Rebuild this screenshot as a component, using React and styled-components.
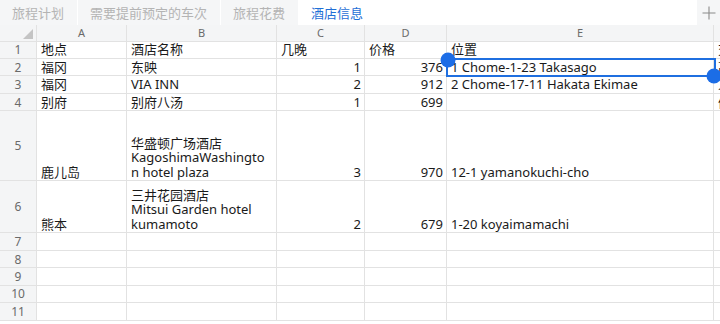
import React from "react";
import styled, { createGlobalStyle } from "styled-components";

const GlobalStyle = createGlobalStyle`
  html, body { margin: 0; padding: 0; background: #fff; }
  body { font-family: "Noto Sans", "Noto Sans CJK SC", sans-serif; }
`;

const UNIT = 17.45;
const COLS = [37, 90, 150, 88, 82, 267, 60];

const Page = styled.div`
  width: 720px;
  height: 324px;
  overflow: hidden;
  background: #fff;
  display: flex;
  flex-direction: column;
`;

const TabBar = styled.div`
  height: 25px;
  flex: none;
  display: flex;
  align-items: stretch;
  background: #fff;
`;

const Tab = styled.div`
  display: flex;
  align-items: center;
  padding: 0 13px 0 12px;
  margin-right: 1px;
  font-family: "Noto Sans CJK SC", sans-serif;
  font-size: 13px;
  color: ${(p) => (p.$active ? "#1f6fd6" : "#b4b4b4")};
  background: ${(p) => (p.$active ? "#fff" : "#f5f6f7")};
`;

const Spacer = styled.div`
  flex: 1;
`;

const AddButton = styled.div`
  width: 23px;
  display: flex;
  align-items: center;
  justify-content: center;
  background: #f5f6f7;
`;

const SheetArea = styled.div`
  position: relative;
  flex: 1;
`;

const Grid = styled.div`
  display: grid;
  grid-template-columns: ${COLS.map((c) => c + "px").join(" ")};
  grid-auto-rows: auto;
`;

const Cell = styled.div`
  box-sizing: border-box;
  height: ${(p) => p.$h}px;
  border-right: 1px solid #e2e2e2;
  border-bottom: 1px solid #e2e2e2;
  overflow: hidden;
  display: flex;
  flex-direction: column;
  justify-content: flex-end;
  align-items: ${(p) => (p.$num ? "flex-end" : "flex-start")};
  padding: 0 3px 1px 4px;
  font-family: "Noto Sans", "Noto Sans CJK SC", sans-serif;
  font-size: 13px;
  line-height: 14.5px;
  color: #1a1a1a;
  white-space: nowrap;
`;

const HeaderCell = styled.div`
  box-sizing: border-box;
  height: 16.5px;
  border-right: 1px solid #e2e2e2;
  border-bottom: 1px solid #e2e2e2;
  background: #f4f5f6;
  display: flex;
  align-items: center;
  justify-content: center;
  font-family: "Noto Sans", sans-serif;
  font-size: 11px;
  color: #6a6a6a;
  position: relative;
`;

const RowNum = styled.div`
  box-sizing: border-box;
  height: ${(p) => p.$h}px;
  border-right: 1px solid #e2e2e2;
  border-bottom: 1px solid #e2e2e2;
  background: #f4f5f6;
  display: flex;
  align-items: center;
  justify-content: center;
  font-family: "Noto Sans", sans-serif;
  font-size: 12px;
  color: #6a6a6a;
`;

const Selection = styled.div`
  position: absolute;
  box-sizing: border-box;
  border: 2px solid #1f6fe0;
  pointer-events: none;
`;

const Handle = styled.div`
  position: absolute;
  width: 15px;
  height: 15px;
  border-radius: 50%;
  background: #1c6de6;
  transform: translate(-50%, -50%);
`;

const rows = [
  { n: 1, u: 1, c: ["地点", "酒店名称", "几晚", "价格", "位置", "交通"] },
  { n: 2, u: 1, c: ["福冈", "东映", 1, 376, "1 Chome-1-23 Takasago", "高砂"] },
  { n: 3, u: 1, c: ["福冈", "VIA INN", 2, 912, "2 Chome-17-11 Hakata Ekimae", "人"] },
  { n: 4, u: 1, c: ["别府", "别府八汤", 1, 699, "", "们"] },
  {
    n: 5,
    u: 4,
    c: ["鹿儿岛", ["华盛顿广场酒店", "KagoshimaWashingto", "n hotel plaza"], 3, 970, "12-1 yamanokuchi-cho", ""],
  },
  {
    n: 6,
    u: 3,
    c: ["熊本", ["三井花园酒店", "Mitsui Garden hotel", "kumamoto"], 2, 679, "1-20 koyaimamachi", ""],
  },
  { n: 7, u: 1, c: ["", "", "", "", "", ""] },
  { n: 8, u: 1, c: ["", "", "", "", "", ""] },
  { n: 9, u: 1, c: ["", "", "", "", "", ""] },
  { n: 10, u: 1, c: ["", "", "", "", "", ""] },
  { n: 11, u: 1, c: ["", "", "", "", "", ""] },
];

const Corner = () => (
  <svg width="10" height="10" viewBox="0 0 10 10" style={{ position: "absolute", right: 3, bottom: 2 }}>
    <polygon points="10,0 10,10 0,10" fill="#c4c4c4" />
  </svg>
);

export default function App() {
  return (
    <>
      <GlobalStyle />
      <Page>
        <TabBar>
          <Tab>旅程计划</Tab>
          <Tab>需要提前预定的车次</Tab>
          <Tab>旅程花费</Tab>
          <Tab $active>酒店信息</Tab>
          <Spacer />
          <AddButton>
            <svg width="14" height="14" viewBox="0 0 14 14">
              <path d="M7 0.5V13.5M0.5 7H13.5" stroke="#8a8a8a" strokeWidth="1.1" fill="none" />
            </svg>
          </AddButton>
        </TabBar>
        <SheetArea>
          <Grid>
            <HeaderCell>
              <Corner />
            </HeaderCell>
            {["A", "B", "C", "D", "E", ""].map((l, i) => (
              <HeaderCell key={i}>{l}</HeaderCell>
            ))}
            {rows.map((r) => (
              <React.Fragment key={r.n}>
                <RowNum $h={r.u * UNIT}>{r.n}</RowNum>
                {r.c.map((v, i) => (
                  <Cell key={i} $h={r.u * UNIT} $num={typeof v === "number"}>
                    {Array.isArray(v) ? v.map((line, k) => <span key={k}>{line}</span>) : v}
                  </Cell>
                ))}
              </React.Fragment>
            ))}
          </Grid>
          <Selection style={{ left: 446, top: 16.5 + UNIT - 1, width: 270, height: UNIT + 2 }} />
          <Handle style={{ left: 447.5, top: 16.5 + UNIT + 1.5 }} />
          <Handle style={{ left: 714, top: 16.5 + 2 * UNIT }} />
        </SheetArea>
      </Page>
    </>
  );
}
